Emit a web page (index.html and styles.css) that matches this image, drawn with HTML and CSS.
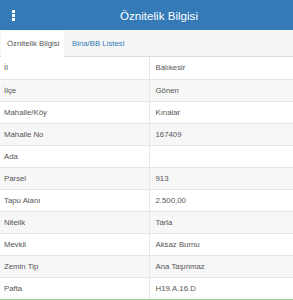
FILE: index.html
```html
<!DOCTYPE html>
<html lang="tr">
<head>
<meta charset="utf-8">
<link rel="stylesheet" href="styles.css">
</head>
<body>
<div class="header">
  <span class="kebab"><i></i><i></i><i></i></span>
  <span class="title">Öznitelik Bilgisi</span>
</div>
<div class="tabs">
  <div class="tab active">Öznitelik Bilgisi</div>
  <div class="tab">Bina/BB Listesi</div>
</div>
<table class="attr">
  <tr><td>İl</td><td>Balıkesir</td></tr>
  <tr><td>İlçe</td><td>Gönen</td></tr>
  <tr><td>Mahalle/Köy</td><td>Kınalar</td></tr>
  <tr><td>Mahalle No</td><td>167409</td></tr>
  <tr><td>Ada</td><td></td></tr>
  <tr><td>Parsel</td><td>913</td></tr>
  <tr><td>Tapu Alanı</td><td>2.500,00</td></tr>
  <tr><td>Nitelik</td><td>Tarla</td></tr>
  <tr><td>Mevkii</td><td>Aksaz Burnu</td></tr>
  <tr><td>Zemin Tip</td><td>Ana Taşınmaz</td></tr>
  <tr><td>Pafta</td><td>H19.A.16.D</td></tr>
</table>
<div class="bottom"></div>
</body>
</html>
```
FILE: styles.css
```css
* { box-sizing: border-box; }
html, body { margin: 0; padding: 0; background: #fff; }
body { font-family: "Liberation Sans", Arial, sans-serif; color: #555; overflow: hidden; }
.header {
  height: 30px;
  background: #337ab7;
  display: flex;
  align-items: center;
  color: #fff;
}
.kebab {
  width: 27px;
  display: flex;
  flex-direction: column;
  align-items: center;
  gap: 1px;
}
.kebab i { display: block; width: 3px; height: 3px; background: #fff; }
.title {
  flex: 1;
  text-align: center;
  font-size: 11.6px;
  padding-right: 2px;
  margin-top: 1px;
}
.tabs {
  height: 27px;
  background: #f5f5f5;
  border-bottom: 1px solid #ddd;
  display: flex;
  align-items: flex-end;
  font-size: 7.8px;
}
.tab {
  height: 25px;
  line-height: 25px;
  padding: 0 5px 0 7px;
  color: #337ab7;
}
.tab.active {
  background: #fff;
  color: #555;
  margin-left: 1px;
  margin-bottom: -1px;
  height: 26px;
  width: 63px;
  padding: 0 0 0 6px;
}
.tab + .tab { padding-left: 8px; }
.attr {
  width: 100%;
  border-collapse: collapse;
  font-size: 7.8px;
}
.attr td {
  height: 22px;
  padding: 0 4px;
  border-bottom: 1px solid #e6e6e6;
  vertical-align: middle;
}
.attr td:first-child { width: 149px; border-right: 1px solid #e6e6e6; }
.attr td:last-child { padding-left: 6px; }
.attr tr:nth-child(even) td { background: #f7f7f7; }
.attr tr:last-child td { border-bottom: none; }
.bottom { height: 2px; background: #9fd59f; }
```
